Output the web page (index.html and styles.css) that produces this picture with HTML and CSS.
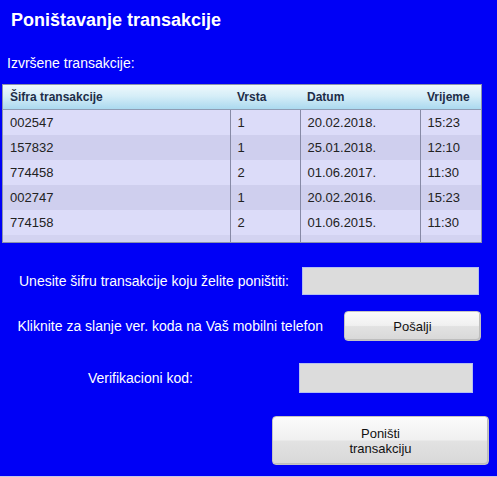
FILE: index.html
```html
<!DOCTYPE html>
<html lang="hr">
<head>
<meta charset="utf-8">
<title>Poništavanje transakcije</title>
<link rel="stylesheet" href="styles.css">
</head>
<body>
<div class="page">
  <h1 class="title">Poništavanje transakcije</h1>
  <div class="subtitle">Izvršene transakcije:</div>
  <div class="grid-wrap">
    <table class="grid">
      <colgroup>
        <col class="c1"><col class="c2"><col class="c3"><col class="c4">
      </colgroup>
      <thead>
        <tr><th>Šifra transakcije</th><th>Vrsta</th><th>Datum</th><th>Vrijeme</th></tr>
      </thead>
      <tbody>
        <tr><td>002547</td><td>1</td><td>20.02.2018.</td><td>15:23</td></tr>
        <tr><td>157832</td><td>1</td><td>25.01.2018.</td><td>12:10</td></tr>
        <tr><td>774458</td><td>2</td><td>01.06.2017.</td><td>11:30</td></tr>
        <tr><td>002747</td><td>1</td><td>20.02.2016.</td><td>15:23</td></tr>
        <tr><td>774158</td><td>2</td><td>01.06.2015.</td><td>11:30</td></tr>
        <tr class="filler"><td></td><td></td><td></td><td></td></tr>
      </tbody>
    </table>
  </div>

  <div class="form">
    <div class="row row1">
      <label class="lbl lbl1" for="sifra">Unesite šifru transakcije koju želite poništiti:</label>
      <input id="sifra" class="field field1" type="text">
    </div>
    <div class="row row2">
      <span class="lbl lbl2">Kliknite za slanje ver. koda na Vaš mobilni telefon</span>
      <button class="btn btn-send" type="button">Pošalji</button>
    </div>
    <div class="row row3">
      <label class="lbl lbl3" for="kod">Verifikacioni kod:</label>
      <input id="kod" class="field field2" type="text">
    </div>
    <div class="row row4">
      <button class="btn btn-cancel" type="button">Poništi<br>transakciju</button>
    </div>
  </div>
</div>
</body>
</html>
```

FILE: styles.css
```css
html, body {
  margin: 0;
  padding: 0;
  background: #0000f6;
}
body {
  font-family: "Liberation Sans", Arial, sans-serif;
  color: #ffffff;
}
.page {
  height: 476px;
  padding-top: 10px;
  box-sizing: border-box;
  border-bottom: 1px solid #c6c6e6;
  box-sizing: content-box;
  height: 466px;
  overflow: hidden;
}
.title {
  margin: 0 0 0 11px;
  font-size: 18px;
  line-height: 21px;
  font-weight: bold;
}
.subtitle {
  margin: 24px 0 0 7px;
  font-size: 14px;
  line-height: 16px;
}
.grid-wrap {
  margin: 13px 0 0 2px;
  width: 480px;
  height: 159px;
  box-sizing: border-box;
  border: 1px solid #8a93ab;
  background: #d3d3f1;
  overflow: hidden;
}
.grid {
  border-collapse: collapse;
  table-layout: fixed;
  width: 478px;
  font-size: 13px;
  color: #222;
}
.c1 { width: 227px; }
.c2 { width: 70px; }
.c3 { width: 120px; }
.c4 { width: 61px; }
.grid th {
  height: 24px;
  padding: 0 0 0 7px;
  text-align: left;
  font-size: 12px;
  font-weight: bold;
  color: #1d2d48;
  background: linear-gradient(#eef8fc 0%, #d6eef8 45%, #abd9ef 100%);
  border-bottom: 1px solid #8e9cb4;
}
.grid th:first-child { padding-left: 7px; }
.grid td {
  height: 25px;
  padding: 0 0 0 7px;
  white-space: nowrap;
  overflow: hidden;
}
.grid td + td { border-left: 1px solid #878aa6; }
.grid td:last-child { padding-left: 7px; }
.grid tbody tr:nth-child(odd) td { background: #dcdcf9; }
.grid tbody tr:nth-child(even) td { background: #cfcfee; }
.grid tbody tr.filler td { height: 8px; background: #d3d3f1; }

.form {
  font-size: 14px;
  line-height: 16px;
}
.row {
  display: flex;
  align-items: center;
}
.row1 { margin-top: 24px; height: 28px; }
.row2 { margin-top: 16px; height: 30px; }
.row3 { margin-top: 22px; height: 30px; }
.row4 { margin-top: 23px; height: 49px; }

.lbl { text-align: right; white-space: nowrap; }
.lbl1 { width: 289px; margin-right: 13px; }
.lbl2 { width: 323px; margin-right: 21px; }
.lbl3 { width: 193px; margin-right: 106px; }

.field {
  margin: 0;
  padding: 0;
  box-sizing: border-box;
  background: #dcdcdc;
  border: 1px solid #b4bff0;
  font: inherit;
}
.field1 { width: 177px; height: 28px; }
.field2 { width: 174px; height: 30px; }

.btn {
  margin: 0;
  padding: 0;
  box-sizing: border-box;
  font-family: "Liberation Sans", Arial, sans-serif;
  font-size: 13px;
  line-height: 15px;
  color: #111;
  border: 1px solid #c4c4c4;
  border-radius: 4px;
  background: linear-gradient(#fbfbfb 0%, #f0f0f0 48%, #e2e2e2 52%, #d8d8d8 100%);
  box-shadow: inset -1px -1px 0 #bdbdbd;
}
.btn-send { width: 137px; height: 30px; }
.row4 { padding-left: 272px; }
.btn-cancel { width: 217px; height: 49px; }
```
